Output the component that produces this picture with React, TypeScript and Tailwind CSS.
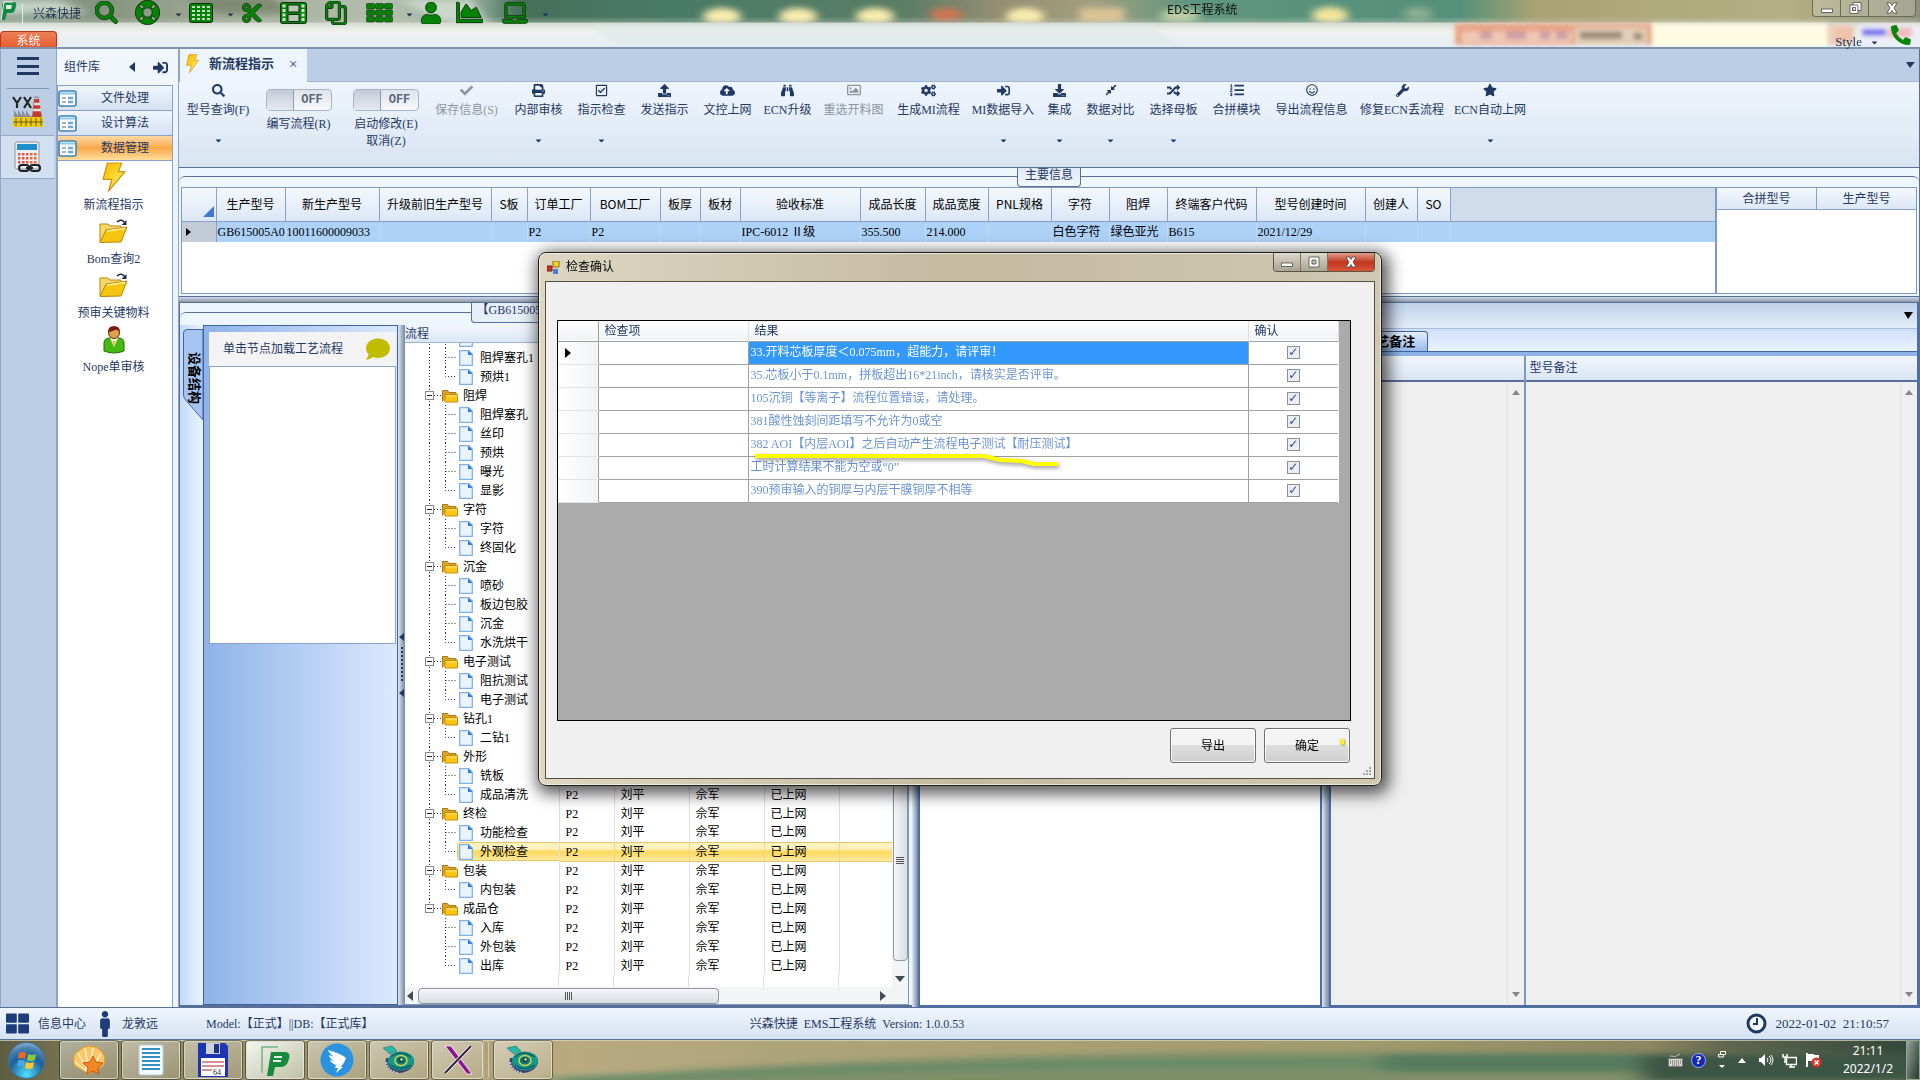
import React from 'react';
import {
  FaBinoculars, FaCaretDown, FaChartArea, FaCheck, FaCloudUploadAlt, FaCogs, FaComment, FaCompressAlt, FaCut,
  FaDownload, FaLaptop, FaLifeRing, FaListOl, FaMale, FaPhoneAlt, FaPrint, FaRandom, FaRegCheckSquare, FaRegCopy, FaRegImage,
  FaRegSmile, FaSearch, FaSignInAlt, FaStar, FaThLarge, FaUpload, FaUser, FaWrench,
} from 'react-icons/fa';

const SONG = "font-['Liberation_Serif','Noto_Sans_CJK_SC',serif]";
const HEI = "font-['Noto_Sans_CJK_SC',sans-serif]";

/* ---------- drawings ---------- */
function Backdrop() {
  return (
    <svg className="absolute inset-0 h-full w-full" viewBox="0 0 1920 48" preserveAspectRatio="none" aria-hidden="true">
      <defs>
        <linearGradient id="wall" x1="0" x2="1" y1="0" y2="0">
          <stop offset="0" stopColor="#8ba596" /><stop offset=".05" stopColor="#84937f" /><stop offset=".12" stopColor="#a2ac98" />
          <stop offset=".2" stopColor="#b4bfae" /><stop offset=".245" stopColor="#9db3a4" /><stop offset=".27" stopColor="#476f5c" />
          <stop offset=".35" stopColor="#487b67" /><stop offset=".47" stopColor="#5b7d66" /><stop offset=".52" stopColor="#948e72" />
          <stop offset=".57" stopColor="#a39f80" /><stop offset=".62" stopColor="#5e957e" /><stop offset=".76" stopColor="#55907a" />
          <stop offset=".8" stopColor="#a9a373" /><stop offset=".93" stopColor="#b5b084" /><stop offset="1" stopColor="#8d8f78" />
        </linearGradient>
        <linearGradient id="glass" x1="0" x2="0" y1="0" y2="1">
          <stop offset="0" stopColor="#d9ded7" /><stop offset=".35" stopColor="#eef1ec" /><stop offset="1" stopColor="#e4eef8" />
        </linearGradient>
        <filter id="soft" x="-20%" y="-50%" width="140%" height="200%"><feGaussianBlur stdDeviation="5 3" /></filter>
        <filter id="soft2" x="-20%" y="-50%" width="140%" height="200%"><feGaussianBlur stdDeviation="2" /></filter>
      </defs>
      <rect width="1920" height="26" fill="url(#wall)" />
      <g filter="url(#soft)">
        <path d="M0 0h60l30 14H0zM400 0l60 30h34L470 0z" fill="#dde5dc" opacity=".7" />
        <path d="M180 -4h90l30 18h-80z" fill="#6f7c64" opacity=".7" />
        {[722, 798, 875, 1025].map((x) => <ellipse key={x} cx={x} cy="17" rx="19" ry="9" fill="#fbecae" />)}
        <ellipse cx="946" cy="15" rx="16" ry="7" fill="#d27552" />
        <rect x="1080" y="8" width="44" height="16" fill="#dcc596" />
        <ellipse cx="1180" cy="16" rx="20" ry="7" fill="#c0d0a8" />
        <ellipse cx="1330" cy="16" rx="18" ry="9" fill="#f3e69c" />
        <ellipse cx="1418" cy="14" rx="14" ry="7" fill="#8fae92" />
      </g>
      <rect y="23" width="1920" height="26" fill="url(#glass)" />
      <rect y="20" width="1920" height="4" fill="#c5cec1" opacity=".5" filter="url(#soft2)" />
      <path d="M590 26h560l30 22H620z" fill="#dfe7e9" opacity=".6" filter="url(#soft2)" />
      <g filter="url(#soft2)">
        <rect x="1455" y="24" width="375" height="22" fill="#e9a586" />
        <rect x="1462" y="32" width="110" height="12" fill="#efc7b3" />
        <path d="M1480 36h12M1506 36h20M1540 36h10M1556 36h12" stroke="#a4709c" strokeWidth="8" opacity=".45" />
        <rect x="1575" y="28" width="72" height="18" fill="#e2cdb7" />
        <path d="M1580 36h42M1634 37h8" stroke="#6d5c4c" strokeWidth="7" opacity=".6" />
        <rect x="1652" y="24" width="176" height="24" fill="#fdfbe2" />
        <rect x="1832" y="26" width="22" height="20" fill="#efc4ac" />
        <rect x="1860" y="25" width="60" height="22" fill="#edeef8" />
        <path d="M1862 33h24" stroke="#5450e6" strokeWidth="7" opacity=".8" /><path d="M1888 33h24" stroke="#eeb9bb" strokeWidth="10" />
      </g>
    </svg>
  );
}

function TaskbarBackdrop() {
  return (
    <svg className="absolute inset-0 h-full w-full" viewBox="0 0 1920 40" preserveAspectRatio="none" aria-hidden="true">
      <defs>
        <linearGradient id="tb" x1="0" x2="1" y1="0" y2="0">
          <stop offset="0" stopColor="#5c5c40" /><stop offset=".06" stopColor="#8b8560" /><stop offset=".3" stopColor="#b9aa80" />
          <stop offset=".4" stopColor="#aea47a" /><stop offset=".7" stopColor="#a39c6e" /><stop offset=".86" stopColor="#8c8660" />
          <stop offset=".9" stopColor="#60664e" /><stop offset="1" stopColor="#2f4638" />
        </linearGradient>
        <filter id="tbs" x="-5%" y="-50%" width="110%" height="200%"><feGaussianBlur stdDeviation="12 3" /></filter>
      </defs>
      <rect width="1920" height="40" fill="url(#tb)" />
      <g filter="url(#tbs)">
        <path d="M540 44Q700 26 950 18T1400 12L1920 14V50H540z" fill="#7f9069" />
        <path d="M550 38Q720 30 960 24T1350 20L1660 18V32L1350 26Q1000 26 720 36L560 44z" fill="#5d8a67" />
        <path d="M1380 14h260v18h-260z" fill="#557c5f" />
        <path d="M1640 14h280v28h-280z" fill="#3d5544" />
      </g>
      <path d="M0 .5h1920" stroke="#d8dac4" strokeOpacity=".7" />
    </svg>
  );
}

const gp = { fill: '#068206', stroke: '#0b2f0b', strokeWidth: 1 };
const GridIcon = () => (
  <svg width="24" height="20" viewBox="0 0 24 20"><rect x=".5" y=".5" width="23" height="19" rx="2" {...gp} />
    {[3, 7, 11, 15].map((y) => [3, 8, 13, 18].map((x) => <rect key={x + '-' + y} x={x} y={y} width="3" height="2" fill="#c6dcc4" />))}</svg>
);
const FilmIcon = () => (
  <svg width="27" height="22" viewBox="0 0 27 22"><rect x=".5" y=".5" width="26" height="21" rx="2" {...gp} />
    <path d="M8 3h11v7H8zM8 12.500h11v7H8z" fill="#b9c6b4" stroke="#0b2f0b" />
    {[2.5, 7, 11.500, 16].map((y) => <g key={y} fill="#d4e2d2"><rect x="2.500" y={y} width="3" height="3" /><rect x="21.500" y={y} width="3" height="3" /></g>)}</svg>
);
const ThIcon = () => (
  <svg width="28" height="20" viewBox="0 0 28 20">{[0.5, 7, 13.5].map((y) => [0.5, 9.5, 18.5].map((x) => <rect key={x + '-' + y} x={x} y={y} width="8" height="5.500" rx="1" {...gp} strokeWidth=".6" />))}</svg>
);
const Bolt = () => (
  <svg width="100%" height="100%" viewBox="0 0 22 32" preserveAspectRatio="none"><defs><linearGradient id="bo" x1="0" y1="0" x2="1" y2="1"><stop offset="0" stopColor="#f4b400" /><stop offset=".5" stopColor="#ffd930" /><stop offset="1" stopColor="#fff3a5" /></linearGradient></defs>
    <path d="M5 1h13l-3 9h6L6 30l3-12H1z" fill="url(#bo)" stroke="#d1930f" strokeWidth="1.200" strokeLinejoin="round" /></svg>
);
const FormIcon = () => (
  <svg width="19" height="17" viewBox="0 0 19 17"><rect x="1" y="1" width="17" height="15" rx="2" fill="#fff" stroke="#3c83b8" strokeWidth="1.600" /><path d="M2 3.500h15" stroke="#8cc6ea" strokeWidth="2" /><path d="M4 8h4M4 12h4" stroke="#8a9aa6" strokeWidth="1.500" /><path d="M10 8h5M10 12h5" stroke="#6fa9d6" strokeWidth="2.500" /></svg>
);
const OpenFolder = () => (
  <svg width="32" height="25" viewBox="0 0 32 25"><path d="M2 23V5h8l2 2h11v4" fill="#f8d866" stroke="#b8860b" /><path d="M2 23.500L8 11l21-3-6 15z" fill="#f6c50e" stroke="#b8860b" strokeLinejoin="round" /><path d="M9 12l18-2.500" stroke="#fff1a8" strokeWidth="1.500" /><path d="M19 3c3-3 6-2 8 1" fill="none" stroke="#24304a" strokeWidth="1.500" /><path d="M28.500 1v5h-5z" fill="#24304a" /></svg>
);
const Person = () => (
  <svg width="24" height="29" viewBox="0 0 24 29"><path d="M2 26V18q0-5 6-5h8q6 0 6 5v8q-10 4-20 0z" fill="#48b813" stroke="#1d6e08" /><path d="M8 13l4 9 4-9z" fill="#f6f6e8" /><circle cx="12" cy="8" r="5.500" fill="#dfa04a" stroke="#5b3410" /><path d="M6 7Q6 1 12 1t6 6q-3-3-5-2-4 2-7 2z" fill="#7a1c12" /><path d="M10 16l2 6 2-6z" fill="#ecc14d" /></svg>
);
const Factory = () => (
  <svg width="32" height="32" viewBox="0 0 32 32"><g fill="none" stroke="#222a20" strokeWidth="2.200"><path d="M1 1l4 6 4-6M5 7v5M12 1l7 11M19 1l-7 11" /></g><path d="M22 3h5l3 19H20z" fill="#c33c32" /><path d="M22 8h6M21 14h8" stroke="#e8e2dc" strokeWidth="2.500" /><path d="M22 2q2-3 5 0" stroke="#777" fill="none" /><path d="M2 20v-6l4 6v-6l4 6v-6l4 6v-6l4 6h2v3H2z" fill="#8a8a92" /><path d="M1 21h30v10H1z" fill="#f0cc14" /><path d="M4 22v8M9 22v8M14 22v8M19 22v8M24 22v8M29 22v8M1 26h30" stroke="#6b5c08" strokeWidth="1" /></svg>
);
const Calc = () => (
  <svg width="28" height="32" viewBox="0 0 28 32"><rect x="1" y="1" width="24" height="27" rx="2" fill="#eceef0" stroke="#9097a0" /><rect x="3" y="3" width="20" height="6" fill="#1f8fd0" />
    {[12, 16, 20].map((y) => [4, 8, 12, 16, 20].map((x) => <rect key={x + '-' + y} x={x} y={y} width="2.500" height="2.500" fill={x > 14 ? '#e46a2e' : '#e05a4a'} />))}
    <g fill="none" stroke="#1c2024" strokeWidth="2"><rect x="5" y="24" width="10" height="6" rx="3" /><rect x="16" y="24" width="10" height="6" rx="3" /><path d="M12 27h7" /></g></svg>
);
const Folder = () => (
  <svg width="16" height="14" viewBox="0 0 16 14"><path d="M.5 12.500V1.500h5l1.500 2h7v2" fill="#d9a326" stroke="#a87a1a" /><path d="M3 13V5.500h12.500V13z" fill="#fdc516" stroke="#c98d0a" /><path d="M4 7h11" stroke="#fee88a" /></svg>
);
const FileIcon = () => (
  <svg width="14" height="16" viewBox="0 0 14 16"><path d="M.7.7h9l3.600 3.600v11H.7z" fill="#eaf4ff" stroke="#7fb0ee" strokeWidth="1.300" /><path d="M9 .5l4.500 4.500H9z" fill="#2f7be0" /></svg>
);
const Logo = () => (
  <svg width="17" height="22" viewBox="0 0 17 22"><path d="M2 20V4l3-2h9q3 0 2 4l-1 4q-1 3-4 3H7l-2 7z" fill="#158a45" /><path d="M6 5h6l-1 4H6z" fill="#dfeee2" /><path d="M1 20L4 2h9" fill="none" stroke="#eef5ee" /></svg>
);
const WinGlyph = ({ kind }: { kind: 'min' | 'max' | 'close' | 'restore' }) => (
  <svg width="14" height="12" viewBox="0 0 14 12" fill="#fff" stroke="#4a4a4a" strokeWidth=".8">
    {kind === 'min' && <rect x="1.500" y="7" width="11" height="3.500" />}
    {kind === 'max' && <path fillRule="evenodd" d="M2 1h10v10H2zM5 4v4h4V4z" />}
    {kind === 'restore' && <><path d="M5 .5h8v8H5z" /><path fillRule="evenodd" d="M2 3h8v8.500H2zM4.500 5.500v3h3v-3z" /></>}
    {kind === 'close' && <path d="M2 1h3.500L7 3.500 8.500 1H12L9 6l3 5H8.500L7 8.500 5.500 11H2l3-5z" />}
  </svg>
);
const Camera = () => (
  <svg width="34" height="30" viewBox="0 0 34 30"><path d="M4 13q-2 8 5 13 8 4 16 0 8-4 7-12z" fill="#3c4266" /><ellipse cx="19" cy="16" rx="13" ry="9.500" fill="#129a8d" /><path d="M9 12q8-8 20 0M9 20q9 7 20 0" stroke="#0a5f66" fill="none" strokeWidth="1.500" /><ellipse cx="19" cy="15.500" rx="6" ry="5" fill="#15796f" stroke="#d7d544" strokeWidth="1.500" /><circle cx="19" cy="15" r="2.500" fill="#0b3f53" /><circle cx="19.500" cy="14.500" r="1.200" fill="#f8e98c" /><path d="M1 3l9-2 5 5-7 3z" fill="#2bb7a5" stroke="#14776d" strokeWidth=".6" /><path d="M4 17q2 9 12 11" stroke="#b9bed2" strokeWidth="2" fill="none" strokeDasharray="2 1" /></svg>
);

/* ---------- small parts ---------- */
const Caret = ({ className = '' }: { className?: string }) => <FaCaretDown size={9} className={className} aria-hidden="true" />;

const TOP_ICONS: { label: string; w: string; icon: React.ReactNode; caret?: boolean }[] = [
  { label: '搜索', w: 'w-[40px]', icon: <FaSearch size={23} {...gp} strokeWidth={18} /> },
  { label: '帮助', w: 'w-[40px]', icon: <FaLifeRing size={25} {...gp} strokeWidth={18} />, caret: true },
  { label: '表格', w: 'w-[38px]', icon: <GridIcon />, caret: true },
  { label: '剪切', w: 'w-[39px]', icon: <FaCut size={22} {...gp} strokeWidth={18} className="-scale-x-100 rotate-180" /> },
  { label: '胶片', w: 'w-[44px]', icon: <FilmIcon /> },
  { label: '复制', w: 'w-[42px]', icon: <FaRegCopy size={24} {...gp} strokeWidth={18} className="-scale-x-100" /> },
  { label: '网格', w: 'w-[40px]', icon: <ThIcon />, caret: true },
  { label: '用户', w: 'w-[36px]', icon: <FaUser size={22} {...gp} strokeWidth={18} /> },
  { label: '图表', w: 'w-[46px]', icon: <FaChartArea size={27} {...gp} strokeWidth={18} /> },
  { label: '电脑', w: 'w-[40px]', icon: <FaLaptop size={26} {...gp} strokeWidth={18} />, caret: true },
];

type Tool = { t: string; w: string; icon: React.ReactNode; caret?: boolean; off?: boolean };
const TOOLS: Tool[] = [
  { t: '保存信息(S)', w: 'mr-[6px] w-[69px]', icon: <FaCheck size={13} />, off: true },
  { t: '内部审核', w: 'w-[63px]', icon: <FaPrint size={13} />, caret: true },
  { t: '指示检查', w: 'w-[63px]', icon: <FaRegCheckSquare size={13} />, caret: true },
  { t: '发送指示', w: 'w-[63px]', icon: <FaUpload size={13} /> },
  { t: '文控上网', w: 'w-[63px]', icon: <FaCloudUploadAlt size={15} /> },
  { t: 'ECN升级', w: 'w-[57px]', icon: <FaBinoculars size={13} /> },
  { t: '重选开料图', w: 'w-[75px]', icon: <FaRegImage size={14} />, off: true },
  { t: '生成MI流程', w: 'w-[75px]', icon: <FaCogs size={15} /> },
  { t: 'MI数据导入', w: 'w-[74px]', icon: <FaSignInAlt size={13} />, caret: true },
  { t: '集成', w: 'w-[39px]', icon: <FaDownload size={13} />, caret: true },
  { t: '数据对比', w: 'w-[63px]', icon: <FaCompressAlt size={12} />, caret: true },
  { t: '选择母板', w: 'w-[63px]', icon: <FaRandom size={13} />, caret: true },
  { t: '合拼模块', w: 'w-[63px]', icon: <FaListOl size={14} /> },
  { t: '导出流程信息', w: 'w-[87px]', icon: <FaRegSmile size={12} /> },
  { t: '修复ECN丢流程', w: 'w-[94px]', icon: <FaWrench size={13} /> },
  { t: 'ECN自动上网', w: 'w-[82px]', icon: <FaStar size={14} />, caret: true },
];

function ToolButton({ tool }: { tool: Tool }) {
  return (
    <button disabled={tool.off} className={`flex flex-none flex-col items-center ${tool.w} ${tool.off ? 'text-[#8f959d]' : 'text-[#1f3864]'}`}>
      <span className="flex h-4 items-center">{tool.icon}</span>
      <span className="mt-1 h-4 whitespace-nowrap text-xs leading-4">{tool.t}</span>
      {tool.caret && <Caret className="mt-[18px]" />}
    </button>
  );
}

function ToggleButton({ lines, w }: { lines: string[]; w: string }) {
  return (
    <button aria-pressed="false" className={`flex flex-none flex-col items-center text-xs leading-[17px] text-[#1f3864] ${w}`}>
      <span className="mt-[7px] mb-[5px] flex h-[22px] w-[66px] rounded-sm border border-[#a9b4c4] bg-linear-to-b from-[#dfe3ea] to-[#f6f8fb]">
        <span className="w-[27px] border-r border-[#8f9db3] bg-linear-to-b from-[#c3cbd8] to-[#e6eaf1]" />
        <span className="flex-1 text-center font-['Liberation_Mono',monospace] text-xs font-bold leading-5 text-[#5c6679]">OFF</span>
      </span>
      {lines.map((l) => <span key={l} className="whitespace-nowrap">{l}</span>)}
    </button>
  );
}

const MAIN_COLS: [string, string, string][] = [
  ['生产型号', 'w-[69px]', 'GB615005A0'], ['新生产型号', 'w-[94px]', '10011600009033'], ['升级前旧生产型号', 'w-[112px]', ''],
  ['S板', 'w-[36px]', ''], ['订单工厂', 'w-[63px]', 'P2'], ['BOM工厂', 'w-[70px]', 'P2'], ['板厚', 'w-[40px]', ''], ['板材', 'w-[40px]', ''],
  ['验收标准', 'w-[120px]', 'IPC-6012 Ⅱ级'], ['成品长度', 'w-[65px]', '355.500'], ['成品宽度', 'w-[63px]', '214.000'], ['PNL规格', 'w-[63px]', ''],
  ['字符', 'w-[58px]', '白色字符'], ['阻焊', 'w-[58px]', '绿色亚光'], ['终端客户代码', 'w-[89px]', 'B615'], ['型号创建时间', 'w-[109px]', '2021/12/29'],
  ['创建人', 'w-[52px]', ''], ['SO', 'w-[33px]', ''],
];

function MainInfo() {
  return (
    <section className="border-y border-[#5a6f96] bg-[#edf5fd]">
      <div className="relative h-[19px]">
        <div className="absolute inset-x-0 top-2 h-2 rounded-t-md border-t border-[#5a6f96]" />
        <div className="relative mx-auto h-[19px] w-[64px] rounded-b border border-t-0 border-[#5a6f96] bg-linear-to-b from-[#dfe9f6] to-[#f4f8fd] text-center text-xs leading-[14px] text-[#1f3864]">主要信息</div>
      </div>
      <div className="mx-[2px] mb-[2px] flex h-[107px] border border-[#8099c0] bg-white">
        <div className={`min-w-0 flex-1 overflow-hidden ${SONG}`}>
          <table className="w-full table-fixed border-collapse text-xs text-black">
            <thead>
              <tr className={`h-[33px] bg-linear-to-b from-[#f4f8fd] to-[#dce7f5] ${HEI}`}>
                <th className="w-[34px] border-r border-b border-[#8aa0c8] p-0 align-bottom"><svg className="mb-1 ml-auto mr-[2px]" width="11" height="11"><path d="M11 0v11H0z" fill="#3f78d4" /></svg></th>
                {MAIN_COLS.map(([h, w]) => <th key={h} className={`whitespace-nowrap border-r border-b border-[#8aa0c8] p-0 font-normal ${w}`}>{h}</th>)}
                <th className="border-b border-[#8aa0c8] bg-[#cfdcec] p-0" />
              </tr>
            </thead>
            <tbody>
              <tr className="h-[21px] bg-[#aed2f7]">
                <td className="border-r border-[#8aa0c8] bg-[#c3cbd6] p-0"><svg className="ml-1" width="5" height="8"><path d="M0 0l5 4-5 4z" /></svg></td>
                {MAIN_COLS.map(([h, , v]) => <td key={h} className="whitespace-nowrap border-r border-[#bddaf8] p-0 pl-px">{v}</td>)}
                <td className="p-0" />
              </tr>
            </tbody>
          </table>
        </div>
        <div className="w-[201px] border-l-2 border-[#8099c0]">
          <table className={`w-full table-fixed border-collapse text-xs ${HEI}`}>
            <thead><tr className="h-[21px] bg-linear-to-b from-[#f4f8fd] to-[#dce7f5]">
              <th className="border-r border-b border-[#8aa0c8] p-0 font-normal">合拼型号</th><th className="border-b border-[#8aa0c8] p-0 font-normal">生产型号</th>
            </tr></thead>
          </table>
        </div>
      </div>
    </section>
  );
}

const TREE: [string, string[]][] = [
  ['阻焊', ['阻焊塞孔', '丝印', '预烘', '曝光', '显影']], ['字符', ['字符', '终固化']], ['沉金', ['喷砂', '板边包胶', '沉金', '水洗烘干']],
  ['电子测试', ['阻抗测试', '电子测试']], ['钻孔1', ['二钻1']], ['外形', ['铣板', '成品清洗']], ['终检', ['功能检查', '外观检查']],
  ['包装', ['内包装']], ['成品仓', ['入库', '外包装', '出库']],
];
type Row = { name: string; folder?: boolean; last?: boolean; end?: boolean; sel?: boolean };
const ROWS: Row[] = [
  { name: '' }, { name: '阻焊塞孔1' }, { name: '预烘1', last: true },
  ...TREE.flatMap(([f, kids], i): Row[] => {
    const end = i === TREE.length - 1;
    return [{ name: f, folder: true, last: end }, ...kids.map((k, j) => ({ name: k, last: j === kids.length - 1, end, sel: k === '外观检查' }))];
  }),
];
const FIRST_ASSIGNED = ROWS.findIndex((r) => r.name === '成品清洗');

function TreeBranch({ row }: { row: Row }) {
  const dots = { stroke: '#333', strokeDasharray: '1 2', fill: 'none' };
  return (
    <svg className="flex-none" width={row.folder ? 37 : 52} height="19" aria-hidden="true">
      {!row.end && <path d={row.folder && row.last ? 'M24.500 0v9' : 'M24.500 0v19'} {...dots} />}
      {row.folder ? (
        <><path d="M29 9.500h8" {...dots} /><rect x="20.500" y="5.500" width="8" height="8" fill="#fff" stroke="#8a8a8a" /><path d="M22 9.500h5" stroke="#222" /></>
      ) : (
        <path d={row.last ? 'M40.500 0v9.500h10' : 'M40.500 0v19M40.500 9.500h10'} {...dots} />
      )}
    </svg>
  );
}

function ProcessTree() {
  const hl = 'bg-[linear-gradient(#fdf1bd_0_35%,#fcd95c_50%,#fde79c)]';
  return (
    <div className="mr-[2px] flex w-[504px] flex-none flex-col border-r border-b border-[#7d98c4] bg-white">
      <div className="flex h-[18px] flex-none items-center border-b border-[#9db4d6] bg-linear-to-b from-[#f1f6fc] to-[#dbe7f5] text-xs leading-4">流程</div>
      <div className="flex min-h-0 flex-1">
        <div className="flex flex-1 flex-col overflow-hidden">
          <table className="-mt-[14px] w-full table-fixed border-collapse text-xs leading-[18px] text-black">
            <colgroup><col className="w-[154px]" /><col className="w-[55px]" /><col className="w-[75px]" /><col className="w-[75px]" /><col className="w-[75px]" /><col /></colgroup>
            <tbody>
              {ROWS.map((r, i) => (
                <tr key={i} className="h-[19px]">
                  <td className="overflow-hidden border-r border-[#dcdfe4] p-0">
                    <div className="flex h-[19px] items-center whitespace-nowrap">
                      <TreeBranch row={r} />
                      <span className={`flex h-[19px] flex-1 items-center ${r.folder ? 'gap-[5px]' : 'gap-[7px]'} ${r.sel ? `rounded-l-sm pl-px border-y border-l border-[#e6c963] ${hl}` : r.folder ? '' : 'pl-[2px]'}`}>
                        {r.folder ? <Folder /> : <FileIcon />}{r.name}
                      </span>
                    </div>
                  </td>
                  {['P2', '刘平', '佘军', '已上网'].map((v) => <td key={v} className={`border-r p-0 pl-[6px] ${r.sel ? `border-y border-y-[#e6c963] border-r-[#f0d878] ${hl}` : 'border-[#dcdfe4]'}`}>{i >= FIRST_ASSIGNED ? v : ''}</td>)}
                  <td className={`p-0 ${r.sel ? `border-y border-[#e6c963] ${hl}` : ''}`} />
                </tr>
              ))}
            </tbody>
          </table>
          <div className="flex flex-1"><span className="w-[154px] border-r border-[#dcdfe4]" /><span className="w-[55px] border-r border-[#dcdfe4]" /><span className="w-[75px] border-r border-[#dcdfe4]" /><span className="w-[75px] border-r border-[#dcdfe4]" /><span className="w-[75px] border-r border-[#dcdfe4]" /></div>
          <div className="flex h-[17px] flex-none items-center justify-between bg-[#f3f4f6] px-[2px]">
            <svg width="6" height="10"><path d="M6 0v10L0 5z" fill="#444b55" /></svg>
            <div className="ml-[5px] flex h-4 w-[301px] items-center justify-center gap-[1px] rounded-sm border border-[#8d96a3] bg-linear-to-b from-[#f5f6f8] to-[#d9dce2]">{[0, 1, 2, 3].map((n) => <i key={n} className="h-2 w-px bg-[#555]" />)}</div>
            <svg className="ml-auto mr-1" width="6" height="10"><path d="M0 0v10l6-5z" fill="#444b55" /></svg>
          </div>
        </div>
        <div className="flex w-4 flex-none flex-col items-center bg-[#f3f4f6]">
          <div className="flex w-[15px] flex-1 flex-col items-center justify-end gap-[1px] rounded-sm border border-[#8d96a3] bg-linear-to-r from-[#f5f6f8] to-[#d9dce2] pb-24">{[0, 1, 2, 3].map((n) => <i key={n} className="h-px w-2 bg-[#555]" />)}</div>
          <svg className="mt-[15px] mb-[22px]" width="10" height="6"><path d="M0 0h10L5 6z" fill="#444b55" /></svg>
        </div>
      </div>
    </div>
  );
}

const CHECKS = [
  '33.开料芯板厚度＜0.075mm，超能力，请评审！', '35.芯板小于0.1mm，拼板超出16*21inch，请核实是否评审。', '105沉铜【等离子】流程位置错误，请处理。',
  '381酸性蚀刻间距填写不允许为0或空', '382 AOI【内层AOI】之后自动产生流程电子测试【耐压测试】', '工时计算结果不能为空或“0”', '390预审输入的铜厚与内层干膜铜厚不相等',
];

function CheckDialog() {
  const wb = 'flex h-[18px] items-center justify-center';
  return (
    <div role="dialog" aria-label="检查确认" className="flex h-[534px] w-[844px] flex-col rounded-lg border border-[#1f1f1a] bg-linear-to-r from-[#dcd6c2] via-[#c5baa0] to-[#cfc8b2] px-[6px] pb-[6px] shadow-[3px_4px_16px_4px_rgba(0,0,0,0.65)] ring-1 ring-inset ring-white/60">
      <header className="flex h-7 flex-none items-start">
        <svg className="mt-2 ml-[2px]" width="13" height="13"><path d="M0 5h5v5H0z" fill="#c8342c" stroke="#7c1713" /><path d="M6 0h6v6H6z" fill="#f8cf2c" stroke="#8c6b0c" /><path d="M6 8h5v5H6z" fill="#4a7fd6" /></svg>
        <h2 className="mt-[5px] ml-[6px] text-xs leading-[18px] text-black">检查确认</h2>
        <div className="ml-auto flex h-[19px] overflow-hidden rounded-b border border-t-0 border-[#5c5646]">
          <button aria-label="最小化" className={`${wb} w-[27px] border-r border-[#7d7663] bg-linear-to-b from-[#dcd8cc] to-[#aaa492]`}><WinGlyph kind="min" /></button>
          <button aria-label="最大化" className={`${wb} w-[27px] border-r border-[#7d7663] bg-linear-to-b from-[#dcd8cc] to-[#aaa492]`}><WinGlyph kind="max" /></button>
          <button aria-label="关闭" className={`${wb} w-[46px] bg-linear-to-b from-[#dd9d8c] via-[#c0341b] to-[#d9543a]`}><WinGlyph kind="close" /></button>
        </div>
      </header>
      <div className="relative flex min-h-0 flex-1 flex-col border border-[#55503f] bg-[#f0f0f0] px-[11px] pt-[38px]">
        <div className="relative h-[401px] w-[794px] border border-black bg-[#ababab]">
          <table className="w-[780px] table-fixed border-collapse bg-white text-xs leading-4">
            <colgroup><col className="w-[40px]" /><col className="w-[150px]" /><col className="w-[500px]" /><col className="w-[90px]" /></colgroup>
            <thead>
              <tr className="h-[20px] border-b border-[#a0a0a0] bg-linear-to-b from-white to-[#f1f2f4] text-left">
                <th className="border-r border-[#a0a0a0] p-0" />
                {['检查项', '结果', '确认'].map((h) => <th key={h} className="border-r border-[#dfe0e2] py-0 pl-[6px] font-normal">{h}</th>)}
              </tr>
            </thead>
            <tbody>
              {CHECKS.map((c, i) => (
                <tr key={c} className="h-[23px] border-b border-[#a0a0a0] text-[#6a94d4]">
                  <td className="border-r border-b border-r-[#a0a0a0] border-b-[#e2e3e5] bg-linear-to-r from-white to-[#f1f2f4] p-0">{i === 0 && <svg className="ml-[7px]" width="6" height="10"><path d="M0 0l6 5-6 5z" /></svg>}</td>
                  <td className="border-r border-[#a0a0a0] p-0" />
                  <td className={`whitespace-nowrap border-r border-[#a0a0a0] p-0 pb-[2px] pl-[2px] ${i === 0 ? 'bg-[#3399ff] text-white' : ''}`}>{c}</td>
                  <td className="p-0 text-center">
                    <input type="checkbox" defaultChecked aria-label={`确认 ${c}`} className="mx-auto block h-[13px] w-[13px] appearance-none border border-[#8e8f8f] bg-[#e9edf4] before:block before:text-center before:font-['DejaVu_Sans'] before:text-[12px] before:leading-[11px] before:font-bold before:text-[#34468a] before:content-['✓']" />
                  </td>
                </tr>
              ))}
            </tbody>
          </table>
          <svg className="absolute top-[128px] left-[188px]" width="320" height="24" aria-hidden="true"><path className="drop-shadow-[1px_2px_2px_rgba(0,0,0,0.45)]" d="M9 7h229l16 4 22 1 12 3h24" fill="none" stroke="#ffff00" strokeWidth="4" strokeLinejoin="round" /></svg>
        </div>
        <div className="mt-[7px] flex justify-end gap-2 pr-[13px]">
          {['导出', '确定'].map((b) => (
            <button key={b} className="relative h-[35px] w-[86px] rounded-[3px] border border-[#707070] bg-[linear-gradient(#f4f4f4_0_48%,#dedede_48%,#cfcfcf)] text-xs text-black ring-1 ring-inset ring-white/80">
              {b}{b === '确定' && <i className="absolute top-[10px] right-[5px] h-[5px] w-1 bg-[#f5f13c] shadow-[1px_1px_3px_#a90]" />}
            </button>
          ))}
        </div>
        <svg className="absolute right-[2px] bottom-[2px]" width="9" height="9" fill="#a8a8a8"><path d="M6 0h2v2H6zM3 3h2v2H3zM6 3h2v2H6zM0 6h2v2H0zM3 6h2v2H3zM6 6h2v2H6z" /></svg>
      </div>
    </div>
  );
}

const Splitter = ({ w }: { w: string }) => <div className={`flex-none bg-linear-to-r from-[#dfe9f5] to-[#76889f] ${w}`} />;

function NoteColumn({ title }: { title: string }) {
  return (
    <>
      <div className="h-[26px] border-b-2 border-[#5a6f96] bg-linear-to-b from-[#f1f6fc] to-[#d9e5f3] pl-[3px] text-xs leading-[25px] text-[#1f3864]">{title}</div>
      <div className="ml-auto flex w-[17px] flex-1 flex-col items-center justify-between border-l border-[#e3e3e3] py-2">
        <svg width="8" height="5"><path d="M0 5h8L4 0z" fill="#858585" /></svg><svg width="8" height="5"><path d="M0 0h8L4 5z" fill="#858585" /></svg>
      </div>
    </>
  );
}

function Lower() {
  return (
    <div className="flex min-h-0 flex-1">
      <section className="flex w-[733px] flex-none flex-col border-l border-[#5a6f96] bg-[#edf5fd]">
        <div className="relative h-[22px]">
          <div className="absolute inset-x-0 top-[9px] h-3 rounded-t-md border-t border-[#5a6f96]" />
          <div className="relative mx-auto h-5 w-[151px] overflow-hidden whitespace-nowrap rounded-b border border-t-0 border-[#5a6f96] bg-[#e6eef9] pl-[5px] text-xs leading-[15px] text-[#1f3864]">【GB615005A0】</div>
        </div>
        <div className="flex min-h-0 flex-1 border-b-2 border-[#5a6f96]">
          <div className="flex w-[23px] flex-none justify-end bg-linear-to-r from-[#c3dafb] to-[#eaf3fe]">
            <svg className="absolute mt-1" width="20" height="92" aria-hidden="true"><path d="M20 .5H4Q.5.500.500 4v62q0 3 3 6l16.500 19z" fill="#a6c4f0" stroke="#3f63a5" /></svg>
            <button className="relative mt-1 flex h-[90px] w-5 items-start justify-center pt-[8px] text-[13px] leading-[18px] font-bold text-black [text-orientation:sideways] [writing-mode:vertical-rl]">设备结构</button>
          </div>
          <div className="w-[195px] flex-none border border-[#3f63a5] bg-linear-to-r from-[#8fb3e8] to-[#dbe9fd] px-[1px] pt-[6px] pl-[5px]">
            <div className="flex h-[34px] items-center justify-between bg-[#f3f3f3] pr-[6px] pl-[14px] text-xs text-[#1f3864]">单击节点加载工艺流程<FaComment size={24} color="#c0bc00" /></div>
            <div className="h-[278px] border border-[#8aa3cc] bg-white" />
          </div>
          <div className="flex w-[7px] flex-none flex-col items-center justify-center bg-linear-to-r from-[#dfe9f5] to-[#76889f]">
            <svg width="5" height="64"><path d="M5 0v8L0 4z" fill="#1f3864" /><path d="M3 14v36" stroke="#1f3864" strokeWidth="2" strokeDasharray="2 2" /><path d="M5 56v8l-5-4z" fill="#1f3864" /></svg>
          </div>
          <ProcessTree />
        </div>
      </section>
      <Splitter w="w-[6px]" />
      <section className="min-w-0 flex-[403] border-x-2 border-b-2 border-[#4a6ea8] bg-white" />
      <Splitter w="w-[7px]" />
      <section className="flex min-w-0 flex-[590] flex-col border-x-2 border-b-2 border-[#4a6ea8] bg-[#efefef]">
        <div className="flex h-[26px] items-center justify-end border-b border-[#a9bbd6] bg-linear-to-b from-[#bfd1ea] to-[#e3edf9] pr-1"><svg width="9" height="7"><path d="M0 0h9L4 7z" /></svg></div>
        <div className="flex h-[23px] items-end border-b border-[#3f63a5] bg-linear-to-b from-[#cfe0fb] to-[#eaf3fe]">
          <button className="ml-5 h-5 rounded-tr border-t border-r border-[#3f63a5] bg-linear-to-b from-[#e6f0fd] to-[#98b9ea] pr-3 pl-3 text-[13px] leading-[18px] font-bold text-black">工艺备注</button>
        </div>
        <div className="flex min-h-0 flex-1 border-t-4 border-[#8fb3e8]">
          <div className="flex w-1/3 flex-none flex-col border-r-2 border-[#7d98c4]"><NoteColumn title="" /></div>
          <div className="flex flex-1 flex-col"><NoteColumn title="型号备注" /></div>
        </div>
      </section>
    </div>
  );
}

function Taskbar() {
  const apps: { n: string; on?: boolean; narrow?: boolean; icon: React.ReactNode }[] = [
    { n: '贝壳', icon: <svg width="34" height="32" viewBox="0 0 34 32"><path d="M17 30L3 22Q-1 12 6 7t11-5q8 0 13 6t1 14z" fill="#f9c66a" stroke="#e99a2c" /><path d="M17 29L6 9M17 29L13 4M17 29L21 4M17 29L29 10M17 29L3 18" stroke="#fff0c8" strokeWidth="1.500" /><path d="M21 12l3 6 7 1-5 5 1 6-6-3-6 3 1-6-5-5 7-1z" fill="#f0882a" stroke="#c75a10" /></svg> },
    { n: '记事本', icon: <svg width="26" height="32" viewBox="0 0 26 32"><rect x="1" y="1" width="24" height="30" rx="2" fill="#f4f9fc" stroke="#b8cfdc" /><path d="M4 5h18M4 9h18M4 13h18M4 17h18M4 21h18M4 25h18" stroke="#3193bd" strokeWidth="2" /></svg> },
    { n: '磁盘', icon: <svg width="32" height="36" viewBox="0 0 32 36"><path d="M1 1h27l3 3v31H1z" fill="#1d34b5" /><path d="M9 1h14v11H9z" fill="#cdd2d8" /><path d="M17 2h5v9h-5z" fill="#1d2f90" /><path d="M4 16h24v18H4z" fill="#fff" /><path d="M5 20h22M5 24h22M5 28h10" stroke="#b0202c" strokeWidth="1.200" /><text x="16" y="33" fontSize="8" fill="#222">64</text></svg> },
    { n: '兴森快捷', on: true, icon: <svg width="32" height="34" viewBox="0 0 32 34"><path d="M8 33l4-24h14q6 0 4 7-2 8-8 8h-6l-2 9z" fill="#178a3c" /><path d="M15 14h8M14 18h8" stroke="#e7f3e8" strokeWidth="2" /><path d="M3 30V4h16" stroke="#6fb48a" strokeWidth="1.500" fill="none" /></svg> },
    { n: '钉钉', icon: <svg width="34" height="34" viewBox="0 0 34 34"><circle cx="17" cy="17" r="16.500" fill="#2a93e0" /><path d="M8 7q12 3 18 8-1 4-5 9l2 0-7 6 2-5h-3l1-3q-5-2-6-5l4 1q-5-3-5-6l5 2q-5-4-6-7z" fill="#fff" /></svg> },
    { n: '工具一', icon: <Camera /> },
    { n: 'X', narrow: true, icon: <svg width="30" height="30" viewBox="0 0 30 30"><path d="M2 1l22 28h5L8 1z" fill="#8a1690" stroke="#fff" strokeWidth=".8" /><path d="M28 1L2 28" stroke="#fff" strokeWidth="3.500" /><path d="M28 1L2 28" stroke="#33203a" strokeWidth="2" /></svg> },
    { n: '工具二', icon: <Camera /> },
  ];
  return (
    <footer className="relative flex h-10 flex-none items-center overflow-hidden">
      <TaskbarBackdrop />
      <button aria-label="开始" className="relative ml-[8px] flex h-[37px] w-[37px] items-center justify-center rounded-full border border-[#3b6ea0] bg-[radial-gradient(circle_at_50%_90%,#4fe0ff,#1d5f9c_50%,#4d88b4_75%,#c7dbe8)]">
        <svg width="22" height="22" viewBox="0 0 22 22"><path d="M3 4q4-2 7 0L9 10q-3-2-7 0z" fill="#ec6a28" /><path d="M12 5q4 2 8 0l-1 6q-4 2-8 0z" fill="#8bc63f" /><path d="M2 12q3-2 7 0l-1 6q-3-2-7 0z" fill="#4aa7ea" /><path d="M10 13q4 2 8 0l-1 6q-4 2-8 0z" fill="#fbc92c" /></svg>
      </button>
      <nav className="relative ml-[15px] flex gap-1">
        {apps.map((a) => (
          <React.Fragment key={a.n}>
            <button aria-label={a.n} className={`flex h-[38px] items-center justify-center rounded-[3px] border border-[#e6e8d8]/70 ring-1 ring-black/40 ${a.narrow ? 'w-[51px]' : 'w-[58px]'} ${a.on ? 'bg-linear-to-br from-white/90 to-[#cdd6bd]/70' : 'bg-linear-to-br from-white/45 to-white/10'}`}>{a.icon}</button>
            {a.narrow && <i className="-ml-1 mr-px h-[38px] w-[6px] rounded-r-[3px] border-x border-[#e6e8d8]/60" />}
          </React.Fragment>
        ))}
      </nav>
      <div className="relative ml-auto flex items-center gap-3 text-white">
        <svg width="15" height="14" viewBox="0 0 15 14"><path d="M2 3q6 2 10-2" stroke="#bbb" fill="none" /><rect x=".5" y="5.500" width="14" height="8" rx="1" fill="#d8d8d0" stroke="#777" /><path d="M2 8h11M2 10h11M4 12h7" stroke="#555" strokeDasharray="1 1" /></svg>
        <span className="-ml-1 h-[15px] w-[15px] rounded-full border border-[#9fb0f0] bg-[#1528b4] text-center text-xs leading-[13px] font-bold">?</span>
        <svg width="8" height="18" viewBox="0 0 8 18"><path d="M2.500.5h5v3h-5zM.5 3.500h5v2.500h-5z" fill="none" stroke="#fff" /><path d="M1 14h6l-3 3z" fill="#fff" /></svg>
        <svg width="8" height="5"><path d="M0 5h8L4 0z" fill="#fff" /></svg>
        <svg width="16" height="14" viewBox="0 0 16 14"><path d="M1 5h2l4-4v12L3 9H1z" fill="#fff" /><path d="M9 5q2 2 0 4M11 3q4 4 0 8M13 2q4 5 0 10" fill="none" stroke="#fff" /></svg>
        <svg className="-ml-1" width="15" height="15" viewBox="0 0 15 15"><path d="M4.500 4.500h10v7h-10zM7 14h6M9 12v2" fill="none" stroke="#fff" strokeWidth="1.500" /><path d="M1 1v3h4V1M3 4v6" stroke="#fff" fill="none" strokeWidth="1.500" /></svg>
        <svg className="-ml-1" width="17" height="16" viewBox="0 0 17 16"><path d="M2 1v14" stroke="#fff" strokeWidth="2" /><path d="M3 2h5l2 1h4v6H3z" fill="#fff" /><circle cx="11.500" cy="10.500" r="5" fill="#d3352b" /><path d="M9.500 8.500l4 4M13.500 8.500l-4 4" stroke="#fff" strokeWidth="1.500" /></svg>
        <div className="ml-2 w-[52px] text-center font-['Noto_Sans',sans-serif] text-xs leading-[18px]"><div>21:11</div><div>2022/1/2</div></div>
        <span className="h-10 w-[14px] border border-[#93a695] bg-linear-to-br from-white/50 to-black/20" />
      </div>
    </footer>
  );
}

export default function App() {
  const side: [string, React.ReactNode][] = [
    ['新流程指示', <span className="h-[31px] w-[24px]"><Bolt /></span>], ['Bom查询2', <OpenFolder />], ['预审关键物料', <OpenFolder />], ['Nope单审核', <Person />],
  ];
  return (
    <div className={`relative flex h-screen flex-col overflow-hidden bg-[#bccee6] text-[#1f3864] ${SONG}`}>
      <header className="relative h-[49px] flex-none border-b-2 border-[#7d92ad]">
        <Backdrop />
        <div className="relative flex h-full">
          <div className="flex w-[95px] flex-none flex-col">
            <div className="flex h-[31px] items-start"><Logo /><i className="mt-1 ml-[5px] h-5 w-px bg-white/70" /><span className="mt-[5px] ml-[10px] text-xs leading-[18px] text-[#1f3350]">兴森快捷</span></div>
            <button className="h-4 w-[57px] flex-none rounded-t border border-b-0 border-[#b4391c] bg-linear-to-b from-[#ef8055] to-[#e65b33] text-xs leading-[18px] text-white">系统</button>
          </div>
          <div className="flex h-[25px] items-center">
            {TOP_ICONS.map((t) => (
              <React.Fragment key={t.label}>
                <button aria-label={t.label} className={`flex h-6 flex-none items-center ${t.w}`}>{t.icon}</button>
                {t.caret && <Caret className="mt-1 mr-[6px] -ml-px flex-none text-[#1f3350]" />}
              </React.Fragment>
            ))}
          </div>
          <h1 className={`absolute left-[1167px] top-0 text-xs leading-[18px] text-[#111] ${HEI}`}>EDS工程系统</h1>
          <div className="absolute top-0 right-1 flex h-[17px] rounded-b border border-t-0 border-[#6b6c58] bg-white/20">
            <button aria-label="最小化" className="flex w-7 items-center justify-center border-r border-[#6b6c58]"><WinGlyph kind="min" /></button>
            <button aria-label="还原" className="flex w-7 items-center justify-center border-r border-[#6b6c58]"><WinGlyph kind="restore" /></button>
            <button aria-label="关闭" className="flex w-[46px] items-center justify-center"><WinGlyph kind="close" /></button>
          </div>
          <div className="absolute right-[9px] bottom-0 flex items-end gap-[8px]"><span className="text-[13px] leading-[10px]">Style</span><Caret /><FaPhoneAlt size={20} className="mb-[2px] ml-1" color="#0a860a" /></div>
        </div>
      </header>

      <main className="flex min-h-0 flex-1">
        <aside className="flex w-14 flex-none flex-col items-center border-l border-[#8fa5c6] pr-[2px]">
          <button aria-label="菜单" className="mt-2 flex h-[18px] w-[22px] flex-none flex-col justify-between"><i className="h-[3px] w-full bg-[#1f3864]" /><i className="h-[3px] w-full bg-[#1f3864]" /><i className="h-[3px] w-full bg-[#1f3864]" /></button>
          <div className="mt-[13px] h-px w-[42px] bg-[#8399ba]" />
          <button aria-label="工厂" className="flex h-[47px] w-full items-center justify-center border-b border-[#93a8ca]"><Factory /></button>
          <button aria-label="计算" className="flex h-[43px] w-full items-center justify-center border-b border-[#93a8ca] bg-[#d3e0f2]"><Calc /></button>
        </aside>
        <aside className="flex w-[123px] flex-none flex-col border-x border-[#8fa5c6] bg-[#edf3fb]">
          <div className="flex h-9 items-center bg-[#f1f6fd] pl-[7px] text-xs">组件库<svg className="ml-[29px]" width="6" height="10"><path d="M6 0v10L0 5z" fill="#1f3864" /></svg><FaSignInAlt size={15} className="ml-[18px]" /></div>
          <div className="mr-[5px] flex flex-1 flex-col border-x border-t border-[#8aa0c8] bg-white">
            {['文件处理', '设计算法', '数据管理'].map((s, i) => (
              <button key={s} className={`flex h-[25px] items-center border-b border-[#8aa0c8] text-xs ${i === 2 ? 'bg-linear-to-b from-[#fdd9a4] via-[#f9a947] to-[#fddf9c]' : 'bg-linear-to-b from-[#eff5fc] to-[#d5e1f1]'}`}><FormIcon /><span className="ml-[24px]">{s}</span></button>
            ))}
            <ul className="mr-[3px] text-xs">
              {side.map(([t, icon]) => <li key={t}><button className="flex h-[54px] w-full flex-col items-center justify-end leading-[18px]"><span className="mb-[3px] flex h-[32px] items-center">{icon}</span><span className="pb-px">{t}</span></button></li>)}
            </ul>
          </div>
        </aside>

        <div className="flex min-w-0 flex-1 flex-col border-r border-[#5a6f96]">
          <div className="flex h-[33px] flex-none items-end justify-between border-b border-[#a3b5d0]">
            <div className="-mb-px flex h-[33px] w-[128px] items-center border-l border-[#8fa5c6] bg-[#eef4fc] pb-[4px] pl-[6px] text-[13px] font-bold"><span className="h-[20px] w-[13px]"><Bolt /></span><span className="ml-[10px]">新流程指示</span><button aria-label="关闭标签" className="ml-[15px] text-[15px] leading-4 font-normal">×</button></div>
            <svg className="mr-1 mb-[13px]" width="9" height="6"><path d="M0 0h9L4 6z" fill="#1f3864" /></svg>
          </div>
          <div className="flex h-[85px] flex-none items-start overflow-hidden bg-linear-to-b from-[#eff5fd] to-[#d8e4f1]">
            <ToolButton tool={{ t: '型号查询(F)', w: 'w-[78px]', icon: <FaSearch size={13} />, caret: true }} />
            <ToggleButton lines={['编写流程(R)']} w="w-[83px]" />
            <ToggleButton lines={['启动修改(E)', '取消(Z)']} w="w-[92px]" />
            {TOOLS.map((t) => <ToolButton key={t.t} tool={t} />)}
          </div>
          <div className="flex-none"><MainInfo /></div>
          <div className="h-[6px] flex-none border-b border-[#5a6f96] bg-linear-to-b from-[#cfd8e6] to-[#8b97a8]" />
          <Lower />
        </div>
      </main>

      <div className="relative flex h-[33px] flex-none items-center border-y border-[#5a6f96] bg-linear-to-b from-[#eff5fd] to-[#d6e3f2] text-xs">
        <FaThLarge size={23} className="ml-[6px]" color="#1f3c7a" /><span className="ml-[9px]">信息中心</span>
        <FaMale size={26} className="ml-[6px]" color="#1f3c7a" /><span className="ml-[4px]">龙敦远</span>
        <span className="ml-12">Model:【正式】||DB:【正式库】</span>
        <span className="absolute inset-x-0 mr-[206px] text-center">兴森快捷&nbsp; EMS工程系统 &nbsp;Version: 1.0.0.53</span>
        <svg className="ml-auto" width="21" height="21"><circle cx="10.500" cy="10.500" r="8.500" fill="#f4f8fd" stroke="#1f3864" strokeWidth="3" /><path d="M11 5v6H7" fill="none" stroke="#1f3864" strokeWidth="2" /></svg>
        <time className="mr-[31px] ml-[9px] text-[13px]">2022-01-02 &nbsp;21:10:57</time>
      </div>
      <Taskbar />

      <div className="pointer-events-none absolute inset-x-0 top-0 bottom-[42px] flex items-center justify-center *:pointer-events-auto"><CheckDialog /></div>
    </div>
  );
}
